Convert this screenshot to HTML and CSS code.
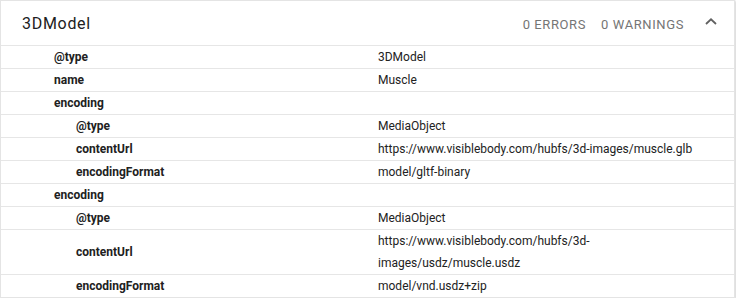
FILE: index.html
```html
<!DOCTYPE html>
<html lang="en">
<head>
    <meta charset="UTF-8">
    <meta name="viewport" content="width=device-width, initial-scale=1.0">
    <title>3DModel</title>
    <link rel="stylesheet" href="styles.css">
</head>
<body>
    <div class="card">
        <div class="card-header">
            <span class="title">3DModel</span>
            <div class="counts">
                <span>0 Errors</span>
                <span>0 Warnings</span>
            </div>
            <svg class="chevron" width="12" height="7" viewBox="0 0 12 7">
                <polyline points="1,6 6,1.3 11,6" fill="none" stroke="#616161" stroke-width="1.8"/>
            </svg>
        </div>
        <div class="row">
            <div class="key">@type</div>
            <div class="val">3DModel</div>
        </div>
        <div class="row">
            <div class="key">name</div>
            <div class="val">Muscle</div>
        </div>
        <div class="row">
            <div class="key">encoding</div>
            <div class="val"></div>
        </div>
        <div class="row">
            <div class="key nested">@type</div>
            <div class="val">MediaObject</div>
        </div>
        <div class="row">
            <div class="key nested">contentUrl</div>
            <div class="val">https://www.visiblebody.com/hubfs/3d-images/muscle.glb</div>
        </div>
        <div class="row">
            <div class="key nested">encodingFormat</div>
            <div class="val">model/gltf-binary</div>
        </div>
        <div class="row">
            <div class="key">encoding</div>
            <div class="val"></div>
        </div>
        <div class="row">
            <div class="key nested">@type</div>
            <div class="val">MediaObject</div>
        </div>
        <div class="row">
            <div class="key nested">contentUrl</div>
            <div class="val">https://www.visiblebody.com/hubfs/3d-images/usdz/muscle.usdz</div>
        </div>
        <div class="row">
            <div class="key nested">encodingFormat</div>
            <div class="val">model/vnd.usdz+zip</div>
        </div>
    </div>
</body>
</html>
```

FILE: styles.css
```css
body {
    margin: 0;
    padding: 0;
    background: #fff;
    font-family: Roboto, "Liberation Sans", sans-serif;
    color: #212121;
}
.card {
    width: 733px;
    border: 1px solid #e4e4e4;
    box-shadow: 1px 1px 2px rgba(0, 0, 0, 0.18);
    background: #fff;
}
.card-header {
    display: flex;
    align-items: center;
    height: 44px;
    padding: 0 17px 0 21px;
}
.title {
    font-size: 16px;
    letter-spacing: 0.7px;
    flex: 1;
    padding-top: 1px;
}
.counts {
    display: flex;
    gap: 15px;
    font-size: 13px;
    letter-spacing: 0.6px;
    text-transform: uppercase;
    color: #757575;
    padding-top: 2px;
}
.chevron {
    margin-left: 21px;
    margin-top: -3px;
}
.row {
    display: grid;
    grid-template-columns: 367px 1fr;
    border-top: 1px solid #e6e6e6;
    font-size: 12px;
    line-height: 22px;
}
.key {
    font-weight: bold;
    padding-left: 53px;
    display: flex;
    align-items: center;
}
.key.nested {
    padding-left: 75px;
}
.val {
    padding: 0 18px 0 10px;
    display: flex;
    flex-direction: column;
    justify-content: center;
    color: #222;
}
```
